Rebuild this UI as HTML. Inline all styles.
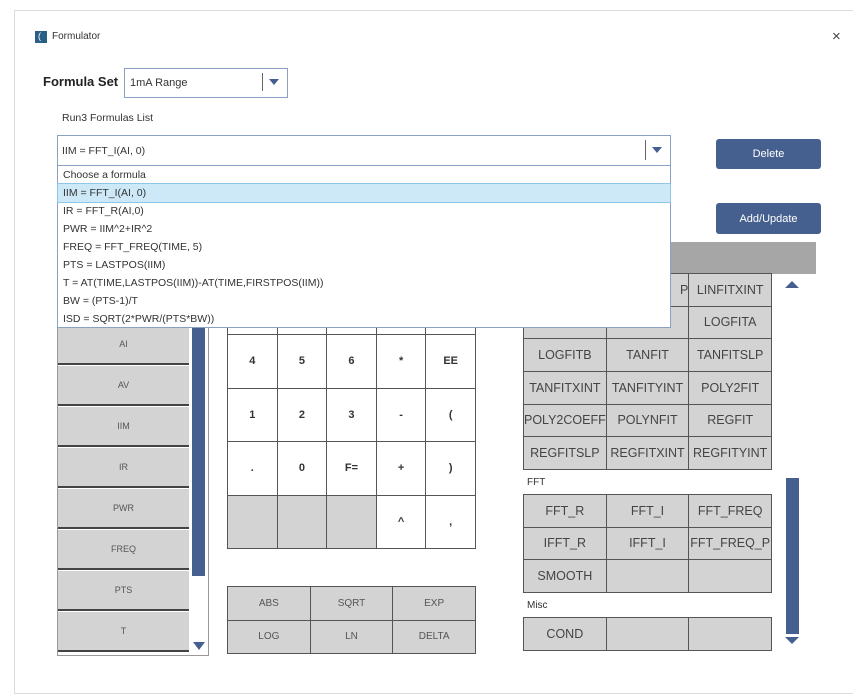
<!DOCTYPE html>
<html><head><meta charset="utf-8"><style>
*{box-sizing:border-box;margin:0;padding:0}
body{width:853px;height:699px;background:#fff;font-family:"Liberation Sans",sans-serif;position:relative;overflow:hidden;color:#333}
.a{position:absolute}
.win{left:14px;top:10px;width:845px;height:684px;border:1px solid #dcdcdc;border-right:none}
.g{position:absolute;display:grid;border:1px solid #555;background:#555;gap:1px}
.g div{background:#d3d3d3;display:flex;align-items:center;justify-content:center;font-size:12.5px;color:#444;white-space:nowrap}
.kp div{background:#fff;font-weight:bold;font-size:11px;color:#333}
.kp div.e{background:#d3d3d3}
.fn div{font-size:10px;color:#555}
.btn{background:#45608f;color:#fff;font-size:11px;border-radius:3px;display:flex;align-items:center;justify-content:center}
.dd div{height:18px;line-height:18px;padding-left:5px;font-size:10.5px;color:#333}
.li div{position:absolute;left:0;width:131px;height:40px;background:#d3d3d3;border-bottom:2px solid #444;display:flex;align-items:center;justify-content:center;font-size:9px;color:#555}
</style></head><body>
<div class="a win"></div>
<div class="a" style="left:35px;top:31px;width:12px;height:12px;background:#2a5f86"></div>
<div class="a" style="left:38px;top:31px;font-size:9px;color:#fff">(</div>
<div class="a" style="left:52px;top:31px;font-size:10px;color:#333">Formulator</div>
<div class="a" style="left:832px;top:28px;font-size:15px;color:#444">×</div>
<div class="a" style="left:43px;top:74px;font-size:13px;font-weight:bold;color:#222">Formula Set</div>
<div class="a" style="left:124px;top:68px;width:164px;height:30px;border:1px solid #8aa0c4"></div>
<div class="a" style="left:130px;top:77px;font-size:11px">1mA Range</div>
<div class="a" style="left:262px;top:73px;width:1px;height:18px;background:#666"></div>
<div class="a" style="left:269px;top:79px;border-left:5px solid transparent;border-right:5px solid transparent;border-top:6px solid #45608f"></div>
<div class="a" style="left:62px;top:112px;font-size:10.5px">Run3 Formulas List</div>
<div class="a" style="left:57px;top:135px;width:614px;height:31px;border:1px solid #8aa0c4"></div>
<div class="a" style="left:62px;top:145px;font-size:10.5px">IIM = FFT_I(AI, 0)</div>
<div class="a" style="left:645px;top:140px;width:1px;height:20px;background:#666"></div>
<div class="a" style="left:652px;top:147px;border-left:5px solid transparent;border-right:5px solid transparent;border-top:6px solid #45608f"></div>
<div class="a btn" style="left:716px;top:139px;width:105px;height:30px">Delete</div>
<div class="a btn" style="left:716px;top:203px;width:105px;height:31px">Add/Update</div>
<div class="a" style="left:523px;top:242px;width:293px;height:32px;background:#a6a6a6"></div>

<div class="a li" style="left:57px;top:280px;width:152px;height:376px;border:1px solid #999;overflow:hidden;background:#fff">
<div style="top:44px">AI</div><div style="top:85px">AV</div><div style="top:126px">IIM</div><div style="top:167px">IR</div><div style="top:208px">PWR</div><div style="top:249px">FREQ</div><div style="top:290px">PTS</div><div style="top:331px">T</div>
</div>
<div class="a" style="left:192px;top:300px;width:13px;height:276px;background:#45608f"></div>
<div class="a" style="left:193px;top:642px;border-left:6px solid transparent;border-right:6px solid transparent;border-top:8px solid #45608f"></div>

<div class="g kp" style="left:227px;top:280px;width:249px;height:269px;grid-template-columns:repeat(5,1fr);grid-template-rows:53px repeat(4,1fr)">
<div></div><div></div><div></div><div></div><div></div>
<div>4</div><div>5</div><div>6</div><div>*</div><div>EE</div>
<div>1</div><div>2</div><div>3</div><div>-</div><div>(</div>
<div>.</div><div>0</div><div>F=</div><div>+</div><div>)</div>
<div class="e"></div><div class="e"></div><div class="e"></div><div>^</div><div>,</div>
</div>
<div class="g fn" style="left:227px;top:586px;width:249px;height:68px;grid-template-columns:repeat(3,1fr);grid-template-rows:repeat(2,1fr)">
<div>ABS</div><div>SQRT</div><div>EXP</div><div>LOG</div><div>LN</div><div>DELTA</div>
</div>

<div class="g" style="left:523px;top:273px;width:249px;height:197px;grid-template-columns:repeat(3,1fr);grid-template-rows:repeat(6,1fr)">
<div></div><div style="justify-content:flex-end">P</div><div>LINFITXINT</div>
<div></div><div></div><div>LOGFITA</div>
<div>LOGFITB</div><div>TANFIT</div><div>TANFITSLP</div>
<div>TANFITXINT</div><div>TANFITYINT</div><div>POLY2FIT</div>
<div>POLY2COEFF</div><div>POLYNFIT</div><div>REGFIT</div>
<div>REGFITSLP</div><div>REGFITXINT</div><div>REGFITYINT</div>
</div>
<div class="a" style="left:527px;top:477px;font-size:10px">FFT</div>
<div class="g" style="left:523px;top:494px;width:249px;height:99px;grid-template-columns:repeat(3,1fr);grid-template-rows:repeat(3,1fr)">
<div>FFT_R</div><div>FFT_I</div><div>FFT_FREQ</div><div>IFFT_R</div><div>IFFT_I</div><div>FFT_FREQ_P</div><div>SMOOTH</div><div></div><div></div>
</div>
<div class="a" style="left:527px;top:600px;font-size:10px">Misc</div>
<div class="g" style="left:523px;top:617px;width:249px;height:34px;grid-template-columns:repeat(3,1fr)">
<div>COND</div><div></div><div></div>
</div>
<div class="a" style="left:785px;top:281px;border-left:7px solid transparent;border-right:7px solid transparent;border-bottom:7px solid #45608f"></div>
<div class="a" style="left:786px;top:478px;width:13px;height:156px;background:#45608f"></div>
<div class="a" style="left:785px;top:637px;border-left:7px solid transparent;border-right:7px solid transparent;border-top:7px solid #45608f"></div>

<div class="a" style="left:57px;top:200px;width:614px;height:36px;border:1px solid #8aa0c4"></div>
<div class="a dd" style="left:57px;top:165px;width:614px;height:163px;border:1px solid #8aa0c4;background:#fff">
<div>Choose a formula</div>
<div style="background:#cde8f6;outline:1px solid #8fc7e8">IIM = FFT_I(AI, 0)</div>
<div>IR = FFT_R(AI,0)</div>
<div>PWR = IIM^2+IR^2</div>
<div>FREQ = FFT_FREQ(TIME, 5)</div>
<div>PTS = LASTPOS(IIM)</div>
<div>T = AT(TIME,LASTPOS(IIM))-AT(TIME,FIRSTPOS(IIM))</div>
<div>BW = (PTS-1)/T</div>
<div>ISD = SQRT(2*PWR/(PTS*BW))</div>
</div>
</body></html>
